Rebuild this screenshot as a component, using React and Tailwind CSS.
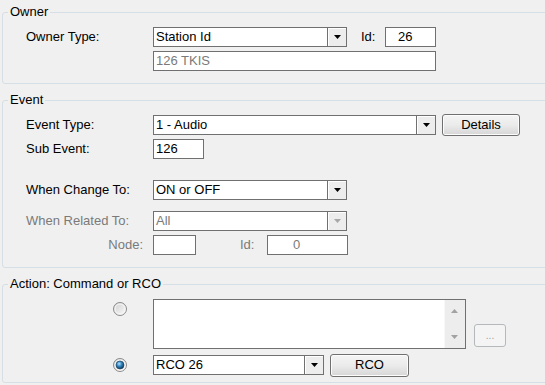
import React from "react";

function Arrow({ color = "#000", up = false }) {
  return (
    <svg width="7" height="4" viewBox="0 0 7 4">
      <path d={up ? "M0 4h7L3.5 0z" : "M0 0h7L3.5 4z"} fill={color} />
    </svg>
  );
}

function Combo({ className, value, disabled }) {
  return (
    <div className={`flex h-[20px] border border-[#707070] bg-white ${className}`}>
      <div className={`flex-1 pl-[2px] leading-[18px] ${disabled ? "text-[#7a7a7a]" : "text-black"}`}>{value}</div>
      <div className="flex w-[19px] items-center justify-center border-l border-[#707070] bg-[#ededed] shadow-[inset_1px_1px_0_#fff]">
        <Arrow color={disabled ? "#a8a8a8" : "#000"} />
      </div>
    </div>
  );
}

function TextBox({ className, value, muted }) {
  return (
    <div className={`h-[20px] border border-[#707070] bg-white leading-[18px] ${muted ? "text-[#7a7a7a]" : "text-black"} ${className}`}>
      {value}
    </div>
  );
}

function Button({ className, children, disabled }) {
  return (
    <div
      className={`flex items-center justify-center rounded-[3px] border ${
        disabled
          ? "border-[#b5b9bc] bg-[#f4f4f4] text-[#a0a0a0]"
          : "border-[#707070] bg-gradient-to-b from-[#f4f4f4] via-[#ebebeb] to-[#d6d6d6] text-black shadow-[inset_0_0_0_1px_#fcfcfc]"
      } ${className}`}
    >
      {children}
    </div>
  );
}

function Radio({ checked }) {
  return (
    <svg width="14" height="14" viewBox="0 0 14 14">
      <defs>
        <linearGradient id="rg" x1="0" y1="0" x2="1" y2="1">
          <stop offset="0" stopColor="#cfcfcf" />
          <stop offset="1" stopColor="#fbfbfb" />
        </linearGradient>
        <radialGradient id="dot" cx="0.4" cy="0.35" r="0.7">
          <stop offset="0" stopColor="#b8e4fb" />
          <stop offset="0.45" stopColor="#2f86c2" />
          <stop offset="1" stopColor="#0b2d4e" />
        </radialGradient>
      </defs>
      <circle cx="7" cy="7" r="6.5" fill="url(#rg)" stroke="#8a8b8b" />
      <circle cx="7" cy="7" r="5" fill="none" stroke="#f7f7f7" strokeWidth="1" />
      {checked && <circle cx="7" cy="7" r="4" fill="url(#dot)" stroke="#1b3f5e" strokeWidth="0.6" />}
    </svg>
  );
}

function Group({ title, className, children }) {
  return (
    <fieldset className={`w-[548px] rounded-[3px] border border-[#d5dfe5] ${className}`}>
      <legend className="ml-[5px] px-[2px] leading-[16px]">{title}</legend>
      {children}
    </fieldset>
  );
}

export default function App() {
  return (
    <div className="h-[385px] w-[545px] overflow-hidden bg-[#f0f0f0] pl-[2px] pt-[4px] font-['Liberation_Sans',Arial,sans-serif] text-[13px] text-black">
      {/* Owner */}
      <Group title="Owner">
        <div className="pb-[12px] pl-[23px] pt-[7px]">
          <div className="flex h-[20px] items-center">
            <div className="w-[127px]">Owner Type:</div>
            <Combo className="w-[194px]" value="Station Id" />
            <div className="ml-[14px] w-[24px]">Id:</div>
            <TextBox className="w-[51px] pl-[12px]" value="26" />
          </div>
          <div className="mt-[4px] flex h-[20px] items-center">
            <div className="w-[127px]"></div>
            <TextBox className="w-[283px] pl-[2px]" value="126 TKIS" muted />
          </div>
        </div>
      </Group>

      {/* Event */}
      <Group title="Event" className="mt-[8px]">
        <div className="pb-[12px] pl-[23px] pt-[7px]">
          <div className="flex h-[20px] items-center">
            <div className="w-[127px]">Event Type:</div>
            <Combo className="w-[283px]" value="1 - Audio" />
            <Button className="ml-[6px] h-[22px] w-[78px]">Details</Button>
          </div>
          <div className="mt-[4px] flex h-[20px] items-center">
            <div className="w-[127px]">Sub Event:</div>
            <TextBox className="w-[51px] pl-[2px]" value="126" />
          </div>
          <div className="mt-[21px] flex h-[20px] items-center">
            <div className="w-[127px]">When Change To:</div>
            <Combo className="w-[194px]" value="ON or OFF" />
          </div>
          <div className="mt-[11px] flex h-[20px] items-center">
            <div className="w-[127px] text-[#7a7a7a]">When Related To:</div>
            <Combo className="w-[194px]" value="All" disabled />
          </div>
          <div className="mt-[4px] flex h-[20px] items-center">
            <div className="w-[117px] text-right text-[#7a7a7a]">Node:</div>
            <div className="w-[10px]"></div>
            <TextBox className="w-[43px]" value="" />
            <div className="ml-[44px] w-[27px] text-[#7a7a7a]">Id:</div>
            <TextBox className="w-[81px] pl-[25px]" value="0" muted />
          </div>
        </div>
      </Group>

      {/* Action */}
      <Group title="Action: Command or RCO" className="mt-[8px]">
        <div className="pb-[7px] pl-[23px] pt-[7px]">
          <div className="flex h-[50px] items-start">
            <div className="w-[127px] pl-[87px] pt-[3px]">
              <Radio />
            </div>
            <div className="flex h-[50px] w-[313px] border border-[#707070] bg-white">
              <div className="flex-1"></div>
              <div className="flex w-[21px] flex-col items-center justify-between bg-[#ededed] py-[9px] shadow-[inset_1px_0_0_#f8f8f8]">
                <Arrow up color="#a2a2a2" />
                <Arrow color="#a2a2a2" />
              </div>
            </div>
            <Button disabled className="ml-[8px] mt-[25px] h-[23px] w-[32px] text-[10px] leading-none">
              ...
            </Button>
          </div>
          <div className="mt-[6px] flex h-[20px] items-center">
            <div className="flex w-[127px] pl-[87px]">
              <Radio checked />
            </div>
            <Combo className="w-[171px]" value="RCO 26" />
            <Button className="ml-[6px] h-[23px] w-[79px]">RCO</Button>
          </div>
        </div>
      </Group>
    </div>
  );
}
